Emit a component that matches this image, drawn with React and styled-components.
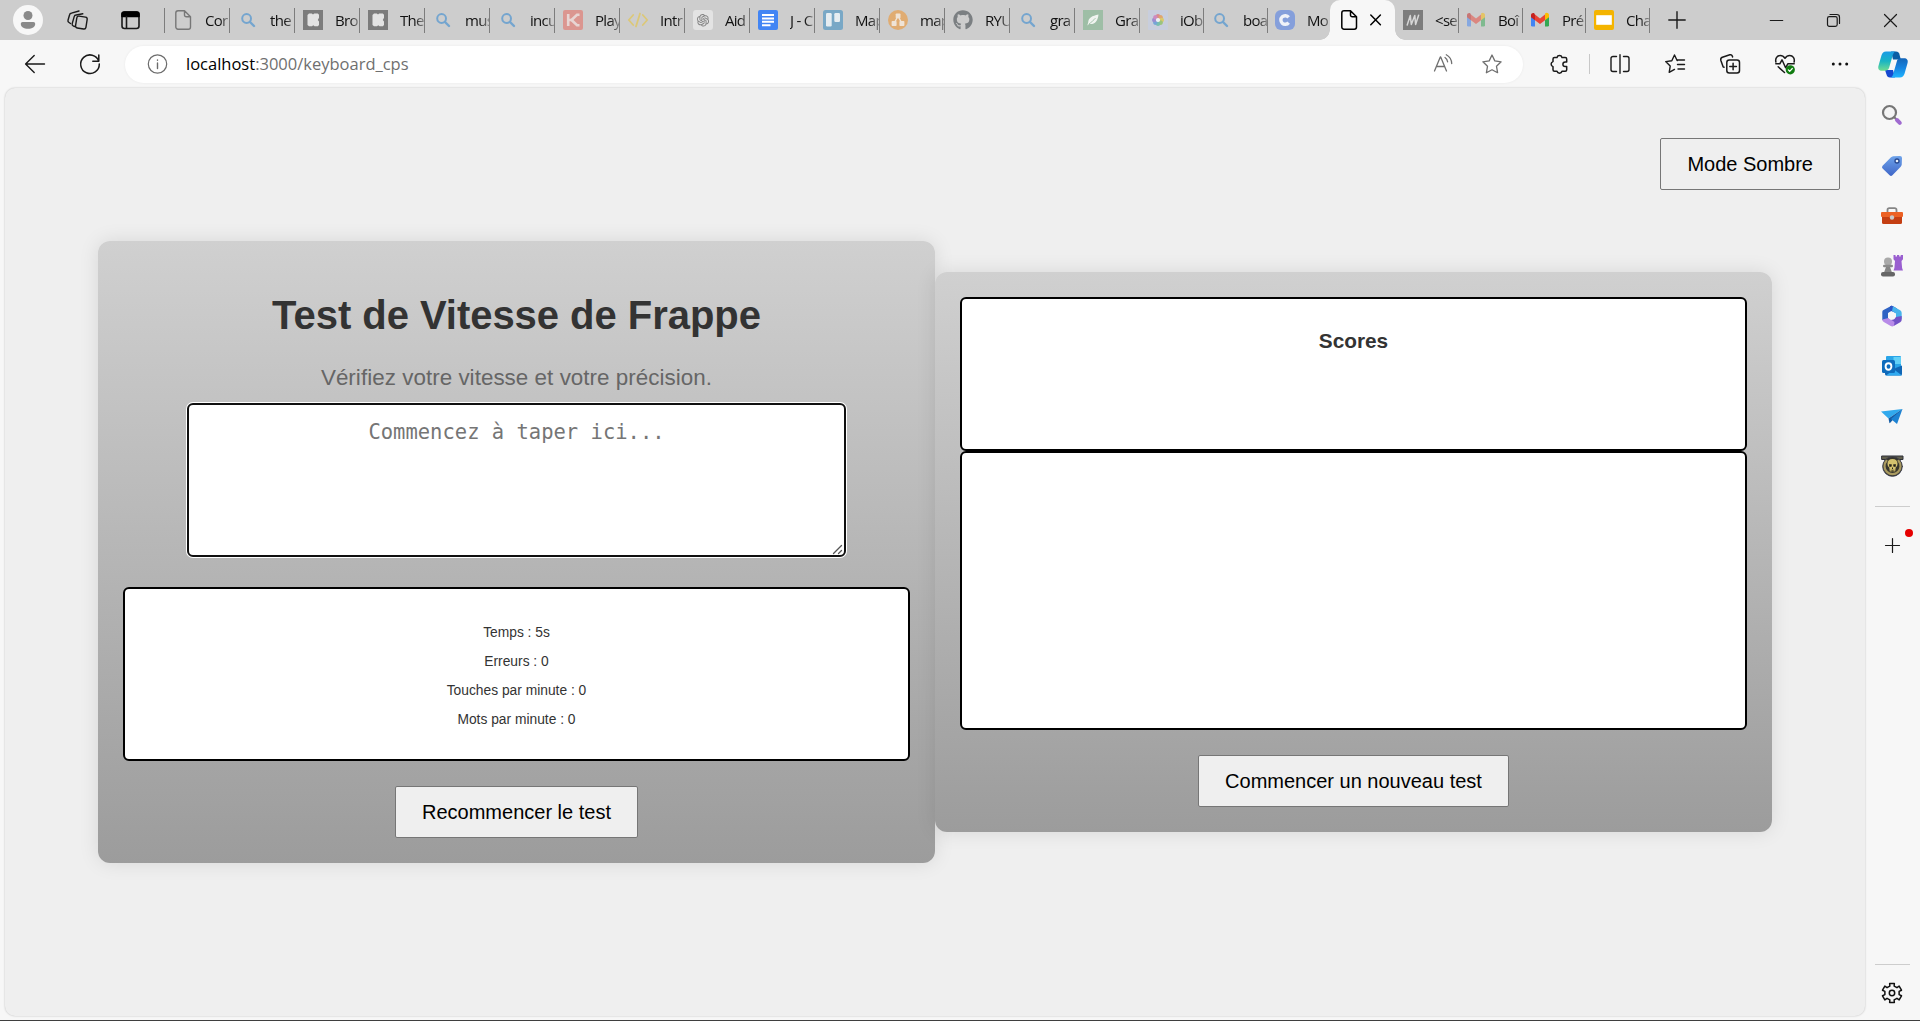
import React from "react";
import styled, { createGlobalStyle, css } from "styled-components";
import { FaGithub } from "react-icons/fa";
import { AiOutlineOpenAI } from "react-icons/ai";

const GlobalStyle = createGlobalStyle`
  *, *::before, *::after { box-sizing: border-box; }
  html, body { margin: 0; padding: 0; }
  body { font-family: "Liberation Sans", Arial, sans-serif; background: #f7f7f7; overflow: hidden; }
`;

/* ---------- window ---------- */

const Window = styled.div`
  display: flex;
  flex-direction: column;
  width: 100vw;
  height: 100vh;
  background: #f7f7f7;
  border-bottom: 1px solid #3f3f3f;
`;

const Svg = styled.svg`
  display: block;
  flex: none;
  overflow: visible;
  fill: none;
  stroke-linecap: round;
  stroke-linejoin: round;
`;

/* ---------- tab strip ---------- */

const TabStrip = styled.div`
  display: flex;
  align-items: center;
  height: 40px;
  flex: none;
  background: #cdcdcd;
`;

const Profile = styled.div`
  width: 30px;
  height: 30px;
  margin-left: 13px;
  border-radius: 50%;
  background: #f7f7f7;
  flex: none;
`;

const StripTools = styled.div`
  display: flex;
  align-items: center;
  width: 122px;
  height: 25px;
  padding-left: 24px;
  gap: 32px;
  border-right: 1px solid #7d7d7d;
  flex: none;
`;

const TabItem = styled.div`
  display: flex;
  align-items: center;
  width: ${(p) => p.$w}px;
  height: 25px;
  padding-left: ${(p) => p.$pad}px;
  border-right: ${(p) => (p.$last ? "0" : "1px solid #7d7d7d")};
  flex: none;
`;

const TabIcon = styled.div`
  display: flex;
  align-items: center;
  justify-content: center;
  width: 20px;
  height: 20px;
  flex: none;
`;

const TabLabel = styled.span`
  flex: 1;
  min-width: 0;
  margin-left: 12px;
  overflow: hidden;
  white-space: nowrap;
  font-family: "Open Sans", "Noto Sans", sans-serif;
  font-size: 15px;
  letter-spacing: -0.7px;
  line-height: 22px;
  color: #111;
  mask-image: linear-gradient(to right, #000 60%, rgba(0, 0, 0, 0.35) 100%);
`;

const ActiveTab = styled.div`
  position: relative;
  display: flex;
  align-items: center;
  gap: 12px;
  width: 65px;
  height: 40px;
  padding-left: 9px;
  border-radius: 10px 10px 0 0;
  background: #f7f7f7;
  flex: none;
  &::before,
  &::after {
    content: "";
    position: absolute;
    bottom: 0;
    width: 10px;
    height: 10px;
  }
  &::before {
    left: -10px;
    background: radial-gradient(circle at 0 0, transparent 9.5px, #f7f7f7 10px);
  }
  &::after {
    right: -10px;
    background: radial-gradient(circle at 100% 0, transparent 9.5px, #f7f7f7 10px);
  }
`;

const NewTab = styled.div`
  margin-left: 18px;
  width: 18px;
  flex: none;
`;

const WindowButtons = styled.div`
  display: flex;
  align-items: center;
  gap: 44px;
  margin-left: auto;
  margin-right: 23px;
`;

/* ---------- toolbar ---------- */

const Toolbar = styled.div`
  display: flex;
  align-items: center;
  height: 48px;
  flex: none;
  padding: 0 12px 0 25px;
`;

const NavButtons = styled.div`
  display: flex;
  align-items: center;
  gap: 35px;
  width: 100px;
`;

const AddressBar = styled.div`
  display: flex;
  align-items: center;
  width: 1398px;
  height: 37px;
  padding: 0 21px 0 23px;
  border-radius: 19px;
  background: #fff;
  box-shadow: 0 0 3px rgba(0, 0, 0, 0.06);
`;

const Url = styled.span`
  flex: 1;
  margin-left: 18px;
  font-family: "Open Sans", "Noto Sans", sans-serif;
  font-size: 16.5px;
  line-height: 24px;
  color: #6f6f6f;
  b { font-weight: 400; color: #000; }
`;

const AddressActions = styled.div`
  display: flex;
  align-items: center;
  gap: 29px;
`;

const ToolIcons = styled.div`
  display: flex;
  align-items: center;
  flex: 1;
  padding-left: 26px;
  svg + svg { margin-left: 35px; }
  svg:last-child { margin-left: auto; }
`;

const ToolDivider = styled.div`
  width: 1px;
  height: 20px;
  margin: 0 20px;
  background: #c8c8c8;
`;

/* ---------- body ---------- */

const Body = styled.div`
  display: flex;
  flex: 1;
  min-height: 0;
`;

const Viewport = styled.main`
  display: flex;
  flex-direction: column;
  width: 1860px;
  height: 928px;
  margin-left: 5px;
  border-radius: 10px;
  background: #efefef;
  box-shadow: 0 0 2px rgba(0, 0, 0, 0.25);
`;

const PageHeader = styled.header`
  display: flex;
  justify-content: flex-end;
  padding: 50px 25px 0 0;
  height: 153px;
`;

const Button = styled.button`
  height: 52px;
  padding: 0 26px;
  border: 1px solid #767676;
  border-radius: 2px;
  background: #efefef;
  color: #000;
  font-family: "Liberation Sans", Arial, sans-serif;
  font-size: 20px;
  line-height: 23px;
  white-space: nowrap;
`;

const Columns = styled.div`
  display: flex;
  align-items: center;
  width: 90%;
  margin: 0 auto;
`;

const Card = styled.section`
  display: flex;
  flex-direction: column;
  align-items: center;
  width: 50%;
  padding: 25px;
  border-radius: 12px;
  background: linear-gradient(to bottom, #d0d0d0, #9c9c9c);
  box-shadow: 0 0 20px rgba(0, 0, 0, 0.1);
`;

const Title = styled.h1`
  margin: 26px 0 0;
  font-size: 40px;
  letter-spacing: -0.04px;
  line-height: 46px;
  font-weight: 700;
  color: #333;
`;

const Subtitle = styled.p`
  margin: 27px 0 0;
  font-size: 22.4px;
  letter-spacing: 0.04px;
  line-height: 26px;
  color: #666;
`;

const TypingBox = styled.div`
  position: relative;
  margin-top: 12px;
`;

const TypingArea = styled.textarea`
  display: block;
  width: 659px;
  height: 154px;
  margin: 0;
  padding: 14px 13px;
  border: 2px solid #101010;
  border-radius: 6px;
  box-shadow: 0 0 0 1px #fff;
  outline: none;
  resize: none;
  background: #fff;
  font-family: "DejaVu Sans Mono", monospace;
  font-size: 20.5px;
  line-height: 26px;
  text-align: center;
  &::placeholder { color: #757575; }
`;

const Grip = styled(Svg)`
  position: absolute;
  right: 4px;
  bottom: 3px;
`;

const panel = css`
  width: 100%;
  border: 2px solid #000;
  border-radius: 6px;
  background: #fff;
  color: #333;
  text-align: center;
`;

const Stats = styled.div`
  ${panel}
  height: 174px;
  margin: 30px 0 25px;
  padding-top: 29px;
`;

const Stat = styled.p`
  margin: 0;
  font-size: 13.8px;
  line-height: 29px;
`;

const ScoreHeader = styled.div`
  ${panel}
  height: 154px;
  padding-top: 30px;
`;

const ScoreTitle = styled.h2`
  margin: 0;
  font-size: 20.8px;
  line-height: 24px;
`;

const ScoreList = styled.div`
  ${panel}
  height: 279px;
  margin-bottom: 25px;
`;

/* ---------- sidebar ---------- */

const Sidebar = styled.aside`
  display: flex;
  flex-direction: column;
  align-items: center;
  flex: 1;
  padding: 2px 1px 0 0;
`;

const SideItem = styled.div`
  display: flex;
  align-items: center;
  justify-content: center;
  height: 50.2px;
  padding-top: ${(p) => p.$drop || 0}px;
`;

const SideRule = styled.div`
  width: 35px;
  height: 1px;
  margin-top: ${(p) => p.$gap || 0}px;
  background: #cdcdcd;
`;

const AddItem = styled.div`
  position: relative;
  margin-top: 31px;
`;

const Notice = styled.span`
  position: absolute;
  top: -9px;
  right: -13px;
  width: 8px;
  height: 8px;
  border-radius: 50%;
  background: #e60000;
`;

const SideFooter = styled.div`
  display: flex;
  flex-direction: column;
  align-items: center;
  gap: 17px;
  margin-top: auto;
  margin-bottom: 16px;
`;

/* ---------- icons ---------- */

const Icon = ({ w = 20, h = 20, c = "#1a1a1a", s = 1.3, children }) => (
  <Svg width={w} height={h} viewBox={`0 0 ${w} ${h}`} stroke={c} strokeWidth={s}>
    {children}
  </Svg>
);

const PageIcon = ({ c = "#000", s = 1.5 }) => (
  <Icon c={c} s={s}>
    <path d="M5 .8h6.5l6 6V17a2.2 2.2 0 0 1-2.2 2.2H5A2.2 2.2 0 0 1 2.8 17V3A2.2 2.2 0 0 1 5 .8zM11.5.8V5a1.8 1.8 0 0 0 1.8 1.8h4.2" />
  </Icon>
);

const SearchIcon = () => (
  <Icon c="#74a5cf" s={2}>
    <circle cx="8.6" cy="8.5" r="4.4" />
    <path d="M12 12l4 4" strokeWidth="2.4" />
  </Icon>
);

const KickIcon = () => (
  <Icon s={0}>
    <rect width="20" height="20" fill="#7c7c7c" />
    <path fill="#e3e3e3" d="M6 3.500h2.800l1.200 1 1.200-1h3.600l1.200 1.300v3L14.800 10l1.200 1.400v3.600l-1.200 1.300h-3.200l-1.400-1-1.200 1H6L4.500 15V5z" />
  </Icon>
);

const KnessetIcon = () => (
  <Icon s={0}>
    <rect width="20" height="20" rx="2" fill="#db9690" />
    <path d="M5.2 4v12M16.500 4.800h-2.500L8.500 10l5.500 5.200h2.500" stroke="#e8d5d3" strokeWidth="2.600" strokeLinecap="butt" strokeLinejoin="miter" />
    <path d="M5.200 10h4" stroke="#e8d5d3" strokeWidth="2.400" />
  </Icon>
);

const CodeIcon = () => (
  <Icon c="#dcc878" s={1.8}>
    <path d="M5.2 5L.8 10l4.4 5M14.8 5l4.4 5-4.4 5M12 3.5L8 16.5" />
  </Icon>
);

const GptIcon = () => (
  <Icon s={0}>
    <rect width="20" height="20" rx="3" fill="#e3e3e3" />
    <AiOutlineOpenAI x={2} y={2} size={16} color="#858585" />
  </Icon>
);

const DocsIcon = () => (
  <Icon c="#fff" s={2}>
    <rect width="20" height="20" rx="2" fill="#4285f4" stroke="none" />
    <path strokeLinecap="butt" d="M4 5h12M4 8.400h12M4 11.800h12M4 15.200h8.500" />
  </Icon>
);

const BoardIcon = () => (
  <Icon s={0}>
    <rect width="20" height="20" rx="2.5" fill="#79a8c6" />
    <rect x="3" y="3" width="5.7" height="13.5" rx="1.2" fill="#e6edf1" />
    <rect x="11.3" y="3" width="5.7" height="9" rx="1.2" fill="#e6edf1" />
  </Icon>
);

const DrawIcon = () => (
  <Icon s={0}>
    <circle cx="10" cy="10" r="10" fill="#e0ac72" />
    <path d="M10 6L6 13.5M10 6l4 7.5" stroke="#efe3d6" strokeWidth="1.5" />
    <rect x="7.7" y="3.5" width="4.8" height="4.8" rx=".8" fill="#efe3d6" />
    <rect x="3.6" y="11" width="5" height="5" rx=".8" fill="#efe3d6" />
    <rect x="11.4" y="11" width="5" height="5" rx=".8" fill="#efe3d6" />
  </Icon>
);

const LeafIcon = () => (
  <Icon s={0}>
    <rect width="20" height="20" fill="#9ebea6" />
    <path fill="#f0f4f0" d="M15.5 4.5C9 6 5.5 7.5 5.2 12.5L4.3 15.6l2-1.6c5.7.6 8.5-2.8 9.2-9.5z" />
    <path d="M6 14c2.5-2 4.5-3.5 6.2-5.6" stroke="#9ebea6" strokeWidth=".9" />
  </Icon>
);

const petals = ["#d98b8b", "#e0a66e", "#dcc86c", "#9cc47c", "#78bfae", "#76a6d6", "#9a8ed0", "#cd8bc0"];

const WheelIcon = () => (
  <Icon s={0}>
    <rect width="20" height="20" rx="1" fill="#c8cedd" />
    {petals.map((color, i) => (
      <circle key={color} cx="10" cy="6.200" r="2.200" fill={color} transform={`rotate(${i * 45} 10 10)`} />
    ))}
    <circle cx="10" cy="10" r="2.100" fill="#edf0f4" />
  </Icon>
);

const CIcon = () => (
  <Icon s={0}>
    <rect width="20" height="20" rx="6" fill="#859fdb" />
    <path d="M13.6 7.4A4.3 4.3 0 1 0 13.6 12.6" stroke="#f0f2f8" strokeWidth="3.4" strokeLinecap="butt" />
  </Icon>
);

const MIcon = () => (
  <Icon s={0}>
    <rect width="20" height="20" fill="#7c7c7c" />
    <path d="M4.200 15L7.300 5.500 8.300 14.500l3.500-9 .8 9L15.600 5.200" stroke="#d6d6d6" strokeWidth="1.500" />
  </Icon>
);

const MailIcon = ({ faded }) => (
  <Svg width="20" height="20" viewBox="0 0 20 20" opacity={faded ? 0.5 : 1}>
    <path fill="#4285f4" d="M1 5l4 3v8.6H2.4A1.4 1.4 0 0 1 1 15.2z" />
    <path fill="#34a853" d="M19 5l-4 3v8.6h2.6a1.4 1.4 0 0 0 1.4-1.4z" />
    <path fill="#fbbc04" d="M15 5v5.2l4-3V5c0-2-2.2-3-3.8-1.8z" />
    <path fill="#ea4335" d="M5 10.2V4.6l5 3.9 5-3.9v5.6L10 14z" />
    <path fill="#c5221f" d="M1 5v2.2l4 3V4.6l-.8-1.4C3 2.4 1 3.2 1 5z" />
  </Svg>
);

const SlidesIcon = () => (
  <Icon s={0}>
    <rect width="20" height="20" rx="2" fill="#f4b400" />
    <rect x="2.2" y="5.2" width="15.6" height="9.6" fill="#fff" />
  </Icon>
);

const tabsBefore = [
  { icon: <PageIcon c="#777" s={1.4} />, label: "Cor" },
  { icon: <SearchIcon />, label: "the" },
  { icon: <KickIcon />, label: "Bro" },
  { icon: <KickIcon />, label: "The" },
  { icon: <SearchIcon />, label: "mus" },
  { icon: <SearchIcon />, label: "incu" },
  { icon: <KnessetIcon />, label: "Play" },
  { icon: <CodeIcon />, label: "Intr" },
  { icon: <GptIcon />, label: "Aid" },
  { icon: <DocsIcon />, label: "J - C" },
  { icon: <BoardIcon />, label: "Map" },
  { icon: <DrawIcon />, label: "map" },
  { icon: <FaGithub size={20} color="#7b7f82" />, label: "RYU" },
  { icon: <SearchIcon />, label: "gra" },
  { icon: <LeafIcon />, label: "Gra" },
  { icon: <WheelIcon />, label: "iOb", w: 64 },
  { icon: <SearchIcon />, label: "boa", w: 64, pad: 7 },
  { icon: <CIcon />, label: "Mo", w: 62, pad: 7, last: true },
];

const tabsAfter = [
  { icon: <MIcon />, label: "<se", w: 64 },
  { icon: <MailIcon faded />, label: "Boî", w: 64, pad: 7 },
  { icon: <MailIcon />, label: "Pré", w: 63, pad: 7 },
  { icon: <SlidesIcon />, label: "Cha", w: 64 },
];

const Tab = ({ icon, label, w = 65, pad = 8, last }) => (
  <TabItem $w={w} $pad={pad} $last={last}>
    <TabIcon>{icon}</TabIcon>
    <TabLabel>{label}</TabLabel>
  </TabItem>
);

const BrowserTabs = () => (
  <TabStrip>
    <Profile>
      <Icon w={30} h={30} s={0}>
        <circle cx="15" cy="10.5" r="4.5" fill="#8a8a8a" />
        <path fill="#8a8a8a" d="M9.5 17h11a1.7 1.7 0 0 1 1.7 1.7c0 3.4-3 5-7.2 5s-7.2-1.6-7.2-5A1.7 1.7 0 0 1 9.5 17z" />
      </Icon>
    </Profile>
    <StripTools>
      <Icon w={21} s={1.4}>
        <rect x="9.2" y="6.5" width="10.5" height="12" rx="2" transform="rotate(9 14 12)" />
        <path d="M7.5 16.5l-1.3-.6a2 2 0 0 1-1-2.3l2-7A2 2 0 0 1 9.3 5l6.500-1.200" />
        <path d="M3.500 13.500l-1.500-1a2 2 0 0 1-1-2.200l1.600-5.600A2 2 0 0 1 4.400 3.200L12 1" />
      </Icon>
      <Icon s={1.6}>
        <rect x="2" y="2" width="17" height="16.5" rx="2.5" />
        <path d="M2 4.500A2.500 2.500 0 0 1 4.500 2h12A2.500 2.500 0 0 1 19 4.500V6.500H2z" fill="#000" stroke="#000" />
        <path d="M6.500 6.500V18" />
      </Icon>
    </StripTools>
    {tabsBefore.map((t, i) => (
      <Tab key={i} {...t} />
    ))}
    <ActiveTab>
      <PageIcon />
      <Icon w={10} h={10} s={1.5} c="#000">
        <path d="M-.2 0l9.600 9.800M9.400 0l-9.600 9.800" />
      </Icon>
    </ActiveTab>
    {tabsAfter.map((t, i) => (
      <Tab key={i} {...t} />
    ))}
    <NewTab>
      <Icon w={18} h={18} s={1.4}>
        <path d="M9 .8v16.400M.8 9h16.400" />
      </Icon>
    </NewTab>
    <WindowButtons>
      <Icon w={13} h={13} s={1.2}>
        <path d="M.3 6.500h12.400" />
      </Icon>
      <Icon w={13} h={13} s={1.2}>
        <rect x=".5" y="2.700" width="9.700" height="9.700" rx="1.800" />
        <path d="M3 .5h6.800a2.700 2.700 0 0 1 2.700 2.700V9.500" />
      </Icon>
      <Icon w={13} h={13} s={1.2}>
        <path d="M.5.5l12 12M12.500.5l-12 12" />
      </Icon>
    </WindowButtons>
  </TabStrip>
);

const STAR = "M10 1l2.800 5.900 6.300.9-4.600 4.500 1.100 6.400L10 15.700l-5.600 3 1.100-6.400L.9 7.800l6.300-.9z";

const CopilotIcon = () => (
  <Svg width="30" height="27" viewBox="0 0 30 27">
    <defs>
      <linearGradient id="cpA" x1="0" y1="0" x2="0" y2="1">
        <stop offset="0" stopColor="#1b9be6" />
        <stop offset=".5" stopColor="#19b4c4" />
        <stop offset="1" stopColor="#6fdc92" />
      </linearGradient>
      <linearGradient id="cpB" x1="0" y1="0" x2="0" y2="1">
        <stop offset="0" stopColor="#1465b8" />
        <stop offset=".5" stopColor="#1684e0" />
        <stop offset="1" stopColor="#20b4ff" />
      </linearGradient>
    </defs>
    <path fill="#0b5ea5" d="M13 .5h5c2 0 3 1.300 3.500 3l1.300 5H15z" />
    <path fill="#1549d0" d="M7 19h8l2 7.500h-5c-2 0-3-1.300-3.500-3z" />
    <path fill="url(#cpA)" d="M8 .5h9.500c-1.600.6-2.200 2-2.700 3.600l-3.600 12.500c-.5 1.800-1.800 3.100-3.800 3.100H4c-3 0-4.400-2-3.500-5l3-10.500C4.200 2 5.700.5 8 .5z" />
    <path fill="url(#cpB)" d="M22 26.500h-9.500c1.600-.6 2.200-2 2.700-3.600l3.600-12.500c.5-1.800 1.800-3.100 3.800-3.100H26c3 0 4.400 2 3.500 5l-3 10.500c-.7 2.200-2.200 3.700-4.500 3.700z" />
  </Svg>
);

const BrowserToolbar = () => (
  <Toolbar>
    <NavButtons>
      <Icon s={1.4}>
        <path d="M19.500 10H.8M9.200 1.500L.6 10l8.600 8.500" />
      </Icon>
      <Icon s={1.5}>
        <path d="M18.800 7.200A9.300 9.300 0 1 0 19.300 10M18.800 1v6.200h-6" />
      </Icon>
    </NavButtons>
    <AddressBar>
      <Icon c="#6b6b6b" s={1.2}>
        <circle cx="9.500" cy="10" r="9.200" />
        <path d="M9.500 9v5.500M9.500 6v.2" strokeWidth="1.400" />
      </Icon>
      <Url>
        <b>localhost</b>:3000/keyboard_cps
      </Url>
      <AddressActions>
        <Icon c="#6f6f6f" s={1.3}>
          <path d="M1.500 17L7.300 3h.4l5.800 14M3.500 12.500h8M12 3.500c1.500 1 2.400 2.500 2.600 4.300M13.300.8c3.200 1.700 5.200 5 5.400 8.700" />
        </Icon>
        <Icon c="#6f6f6f" s={1.3}>
          <path d={STAR} />
        </Icon>
      </AddressActions>
    </AddressBar>
    <ToolIcons>
      <Icon s={1.5}>
        <path d="M5.500 3.500H8a2.600 2.600 0 0 1 5 0h3.200a1.500 1.500 0 0 1 1.500 1.500v3h-1.500a2.300 2.300 0 0 0 0 4.600h1.500v3.200a1.500 1.500 0 0 1-1.500 1.500H13a2.600 2.600 0 0 1-5 0H5.500A1.500 1.500 0 0 1 4 15.800v-3.200a2.600 2.600 0 0 1 0-5V5a1.500 1.500 0 0 1 1.500-1.500z" />
      </Icon>
      <ToolDivider />
      <Icon s={1.4}>
        <path d="M6.500 2.500H3A2 2 0 0 0 1 4.500v11a2 2 0 0 0 2 2h3.500M13.500 2.500H17a2 2 0 0 1 2 2v11a2 2 0 0 1-2 2h-3.500M10 .8v18.400" />
      </Icon>
      <Icon s={1.4}>
        <path d="M12.500 6.500h-.4L9.500 1 6.800 6.700.7 7.600l4.500 4.500-1 6.300 5.300-3M12.500 6h7M12.500 10.500h7M13 15h6.500" />
      </Icon>
      <Icon s={1.5}>
        <rect x="6.800" y="6" width="12.700" height="13" rx="2.500" />
        <path d="M13.100 9.200v6.600M9.800 12.500h6.600M4 13.200l-.8-.3L.8 6.200A2.500 2.500 0 0 1 2.400 3.300L9.800.8a2 2 0 0 1 2.500 1.200l.3.900" />
      </Icon>
      <Icon s={1.5}>
        <path d="M.9 8C0 4.500 2.200 1.500 5.200 1.500c2 0 3.600 1 4.800 2.800 1.200-1.800 2.800-2.800 4.800-2.800 3 0 5.200 3 4.300 6.500M.8 9.800h4L7 5.800l3.600 8 2.200-4h6.400M3.200 12.800L9.500 18.500" />
        <circle cx="15.300" cy="15.800" r="4.600" fill="#107c10" stroke="none" />
        <path d="M13.300 15.900l1.400 1.400 2.600-2.800" stroke="#fff" strokeWidth="1.200" />
      </Icon>
      <Icon s={0}>
        <circle cx="3.300" cy="10" r="1.500" fill="#111" />
        <circle cx="10" cy="10" r="1.500" fill="#111" />
        <circle cx="16.700" cy="10" r="1.500" fill="#111" />
      </Icon>
      <CopilotIcon />
    </ToolIcons>
  </Toolbar>
);

const SideSearch = () => (
  <Svg width="22" height="22" viewBox="0 0 22 22">
    <circle cx="8.500" cy="8.500" r="6.500" stroke="#767676" strokeWidth="2.200" fill="#f4f4f4" />
    <path d="M13.300 13.300l2 2" stroke="#767676" strokeWidth="2" />
    <path d="M16 16l2.800 2.800" stroke="#a06bd0" strokeWidth="4" />
  </Svg>
);

const SideTag = () => (
  <Svg width="22" height="22" viewBox="0 0 22 22">
    <defs>
      <linearGradient id="tg" x1="0" y1="0" x2="0" y2="1">
        <stop offset="0" stopColor="#6ea3ea" />
        <stop offset="1" stopColor="#3f66c8" />
      </linearGradient>
    </defs>
    <path fill="url(#tg)" d="M12 1.300L19 1a2 2 0 0 1 2 2l-.3 7-1 1.800-8.300 8.500a2 2 0 0 1-2.800 0L1.600 13.500a2 2 0 0 1 0-2.800L10 2.300z" />
    <circle cx="16" cy="6" r="2" fill="#e8f0fc" stroke="#27488f" strokeWidth="1.300" />
  </Svg>
);

const SideToolbox = () => (
  <Svg width="22" height="18" viewBox="0 0 22 18">
    <path d="M6.500 5V3A1.800 1.800 0 0 1 8.300 1.200h5.400A1.800 1.800 0 0 1 15.500 3v2" stroke="#858585" strokeWidth="1.800" />
    <path fill="#c43e12" d="M1 9h20v6.500a1.500 1.500 0 0 1-1.500 1.500h-17A1.500 1.500 0 0 1 1 15.500z" />
    <rect y="5" width="22" height="5" rx="1" fill="#ec6124" />
    <circle cx="11" cy="10.500" r="2.200" fill="#c9c9c9" />
  </Svg>
);

const SideGames = () => (
  <Svg width="22" height="22" viewBox="0 0 22 22">
    <path fill="#9a5fd0" d="M12.500 0h2v1.600h1.500V0h2.200v1.600h1.500V0H22v4.300l-1.500 1.700.6 7 .9 2.500h-9.500l.9-2.500.6-7-1.500-1.700z" />
    <circle cx="7" cy="6.500" r="4" fill="#a9a9a9" />
    <rect x="2" y="9.800" width="10" height="2.400" rx="1.200" fill="#8b8b8b" />
    <path fill="#858585" d="M5 12h4l2 5.500H3z" />
    <rect x="0" y="17" width="14" height="4.500" rx="2" fill="#666" />
  </Svg>
);

const SideSuite = () => (
  <Svg width="22" height="22" viewBox="0 0 22 22">
    <path fill="#2f63c4" d="M11 .5L2.500 5a2 2 0 0 0-1.200 2v8L7 17V8l5-3z" />
    <path fill="#2c55c7" d="M9 1.200a3 3 0 0 1 3.200 0L16 3.500v5L9 5.500z" />
    <path fill="#48b4ec" d="M12 1.200l7.200 4A3 3 0 0 1 20.700 8v6L15 12V8.500l-4-2.500z" />
    <path fill="#7352c7" d="M20.700 11v4a3 3 0 0 1-1.500 2.300l-6.500 3.800L9 15.500l6-3.500z" />
    <path fill="#b88be8" d="M1.300 14.500l6.200-1.500 6 4-.5 3.800a3 3 0 0 1-3.300.2L2.800 17a3 3 0 0 1-1.500-2.500z" />
    <circle cx="11" cy="11" r="3.700" fill="#f7f7f7" />
  </Svg>
);

const SideMail = () => (
  <Svg width="22" height="22" viewBox="0 0 22 22">
    <rect x="5" y="1" width="15" height="12" rx="1" fill="#2aa5e8" />
    <path fill="#62d0f7" d="M12.500 2H20v7h-7.500z" />
    <path fill="#1066b5" d="M4 12l8 2 9-3.500V19a1.500 1.500 0 0 1-1.500 1.500H5.500A1.500 1.500 0 0 1 4 19z" />
    <path fill="#30aaf0" d="M5 20.500l8-6 8 6z" />
    <rect x="1" y="5" width="13" height="13" rx="1.500" fill="#0f6cbd" />
    <ellipse cx="7.500" cy="11.500" rx="2.900" ry="3.200" stroke="#fff" strokeWidth="1.900" />
  </Svg>
);

const SidePlane = () => (
  <Svg width="22" height="20" viewBox="0 0 22 20">
    <path fill="#31a9ed" d="M0 4.500L21.500 2 7.500 11.500z" />
    <path fill="#135ca5" d="M7.500 11.500L21.500 2 9.500 15.500l-1 .8z" />
    <path fill="#1d82d2" d="M10 12L21.500 2 16 17z" />
  </Svg>
);

const SideSkull = () => (
  <Svg width="23" height="22" viewBox="0 0 23 22">
    <path fill="#62604e" stroke="#2f3038" strokeWidth="1" d="M1 1h21v3.500h-3v2H4v-2H1z" />
    <circle cx="11.500" cy="11.500" r="9.800" fill="#38362d" stroke="#3c3e4c" />
    <path d="M5.500 5.800a8 8 0 1 0 12 0" stroke="#a99a60" strokeWidth="2.200" />
    <path fill="#d4c26e" d="M11.500 4c-3.200 0-5 2-5 4.600 0 2 .6 3.200 1.800 4l.5 3.800h5.400l.5-3.800c1.200-.8 1.800-2 1.800-4 0-2.600-1.800-4.600-5-4.600z" />
    <path fill="#25221a" d="M8 9.200h2.700v2.300L8.500 12zM15 9.200h-2.700v2.300l2.200.5zM11 12.500h1v1.500h-1z" />
    <path d="M10.200 15v1.500M11.500 15v1.500M12.800 15v1.500" stroke="#3a3423" strokeWidth=".7" />
  </Svg>
);

const sideItems = [
  { icon: <SideSearch /> },
  { icon: <SideTag />, drop: 2 },
  { icon: <SideToolbox />, drop: 2 },
  { icon: <SideGames />, drop: 1 },
  { icon: <SideSuite /> },
  { icon: <SideMail /> },
  { icon: <SidePlane />, drop: 1 },
  { icon: <SideSkull /> },
];

const gearPath = (() => {
  const pts = [];
  for (let i = 0; i < 6; i++) {
    const base = (i * 60 - 90) * (Math.PI / 180);
    [[-0.3, 7.3], [-0.24, 9.9], [0.24, 9.9], [0.3, 7.3]].forEach(([a, r]) => {
      pts.push(`${(11 + r * Math.cos(base + a)).toFixed(2)} ${(11 + r * Math.sin(base + a)).toFixed(2)}`);
    });
  }
  return `M${pts.join("L")}z`;
})();

const stats = ["Temps : 5s", "Erreurs : 0", "Touches par minute : 0", "Mots par minute : 0"];

export default function App() {
  return (
    <Window>
      <GlobalStyle />
      <BrowserTabs />
      <BrowserToolbar />
      <Body>
        <Viewport>
          <PageHeader>
            <Button>Mode Sombre</Button>
          </PageHeader>
          <Columns>
            <Card>
              <Title>Test de Vitesse de Frappe</Title>
              <Subtitle>Vérifiez votre vitesse et votre précision.</Subtitle>
              <TypingBox>
                <TypingArea placeholder="Commencez à taper ici..." />
                <Grip width="9" height="9" viewBox="0 0 9 9" stroke="#555" strokeWidth="1.3">
                  <path d="M.5 8.500l8-8M5.500 8.500l3-3" />
                </Grip>
              </TypingBox>
              <Stats>
                {stats.map((s) => (
                  <Stat key={s}>{s}</Stat>
                ))}
              </Stats>
              <Button>Recommencer le test</Button>
            </Card>
            <Card>
              <ScoreHeader>
                <ScoreTitle>Scores</ScoreTitle>
              </ScoreHeader>
              <ScoreList />
              <Button>Commencer un nouveau test</Button>
            </Card>
          </Columns>
        </Viewport>
        <Sidebar>
          {sideItems.map(({ icon, drop }, i) => (
            <SideItem key={i} $drop={drop}>
              {icon}
            </SideItem>
          ))}
          <SideRule $gap={14} />
          <AddItem>
            <Icon w={15} h={15} s={1.2}>
              <path d="M7.500.5v14M.5 7.500h14" />
            </Icon>
            <Notice />
          </AddItem>
          <SideFooter>
            <SideRule />
            <Svg width="22" height="22" viewBox="0 0 22 22" stroke="#111" strokeWidth="1.500">
              <path d={gearPath} />
              <circle cx="11" cy="11" r="2.700" />
            </Svg>
          </SideFooter>
        </Sidebar>
      </Body>
    </Window>
  );
}
